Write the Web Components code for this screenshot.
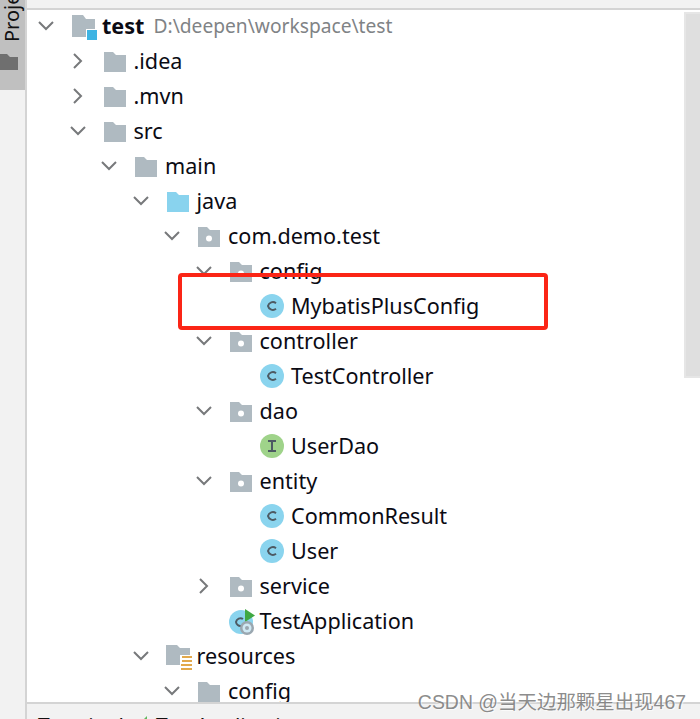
<!DOCTYPE html>
<html>
<head>
<meta charset="utf-8">
<title>Project tree</title>
<style>
  html, body { margin: 0; padding: 0; height: 100%; background: #fff; }
</style>
</head>
<body>
<project-window>
  <tree-row level="0" arrow="open" icon="module"><b>test</b><span slot="hint">D:\deepen\workspace\test</span></tree-row>
  <tree-row level="1" arrow="closed" icon="folder">.idea</tree-row>
  <tree-row level="1" arrow="closed" icon="folder">.mvn</tree-row>
  <tree-row level="1" arrow="open" icon="folder">src</tree-row>
  <tree-row level="2" arrow="open" icon="folder">main</tree-row>
  <tree-row level="3" arrow="open" icon="source">java</tree-row>
  <tree-row level="4" arrow="open" icon="package">com.demo.test</tree-row>
  <tree-row level="5" arrow="open" icon="package">config</tree-row>
  <tree-row level="6" icon="class">MybatisPlusConfig</tree-row>
  <tree-row level="5" arrow="open" icon="package">controller</tree-row>
  <tree-row level="6" icon="class">TestController</tree-row>
  <tree-row level="5" arrow="open" icon="package">dao</tree-row>
  <tree-row level="6" icon="interface">UserDao</tree-row>
  <tree-row level="5" arrow="open" icon="package">entity</tree-row>
  <tree-row level="6" icon="class">CommonResult</tree-row>
  <tree-row level="6" icon="class">User</tree-row>
  <tree-row level="5" arrow="closed" icon="package">service</tree-row>
  <tree-row level="5" icon="app">TestApplication</tree-row>
  <tree-row level="3" arrow="open" icon="resources">resources</tree-row>
  <tree-row level="4" arrow="open" icon="folder">config</tree-row>
</project-window>

<script>
// all icons are drawn on a 24x24 box
const FOLDER = 'M1 3h9l3 3h10v17H1z';
const ICONS = {
  folder: `<path fill="#afbac1" d="${FOLDER}"/>`,
  source: `<path fill="#89d3ee" d="${FOLDER}"/>`,
  package: `<path fill="#afbac1" d="${FOLDER}"/><circle cx="12" cy="14.5" r="3" fill="#fff"/>`,
  module: `<path fill="#afbac1" d="M1 1h11l3 4h9v18H1z"/><rect x="15" y="15" width="10" height="10" fill="#fff"/><rect x="16" y="16" width="10" height="10" fill="#3eb4e3"/>`,
  resources: `<path fill="#afbac1" d="M0 1h11l3 3h10v17H0z"/><rect x="14" y="11" width="12" height="14" fill="#fff"/><path fill="#e2a94c" d="M16 12h10v2H16zM16 16h10v2H16zM15 20h11v2H15zM15 24h11v2H15z"/>`,
  class: `<circle cx="12" cy="12" r="12" fill="#8ad4ee"/><path fill="none" stroke="#4d5a63" stroke-width="2" d="M16 9.2A5 5 0 0 0 8 12a5 5 0 0 0 8 2.8"/>`,
  interface: `<circle cx="12" cy="12" r="12" fill="#9fd38a"/><path fill="none" stroke="#4d5a63" stroke-width="2" d="M8 7h8M12 7v10M8 17h8"/>`,
  app: `<circle cx="12" cy="13" r="12" fill="#8ad4ee"/><path fill="none" stroke="#4d5a63" stroke-width="2" d="M14 10a4.5 4.5 0 0 0-7 3a4.5 4.5 0 0 0 5 4"/><path fill="#3fa843" d="M16 0l10 6.500l-10 6.500z"/><circle cx="18" cy="19" r="7" fill="#9aa7b0"/><circle cx="18" cy="19" r="4.500" fill="#cfe9f4"/><circle cx="18" cy="19" r="2" fill="#9aa7b0"/>`
};

class TreeRow extends HTMLElement {
  constructor() {
    super();
    this.attachShadow({ mode: 'open' });
  }

  connectedCallback() {
    const arrow = this.getAttribute('arrow');
    const icon = this.getAttribute('icon');
    const level = Number(this.getAttribute('level') || 0);
    let chevron = '';
    if (arrow === 'open') chevron = '<path d="M2 5l7 7 7-7"/>';
    if (arrow === 'closed') chevron = '<path d="M5 2l7 7-7 7"/>';
    this.shadowRoot.innerHTML = `
      <style>
        :host {
          display: flex;
          align-items: center;
          height: 35px;
          padding-left: ${37 + level * 31.5}px;
          font: 21.6px "Noto Sans", "Open Sans", sans-serif;
          color: #0b0b14;
          white-space: nowrap;
        }
        .arrow { width: 18px; height: 18px; flex: none; margin-right: 16px; }
        .arrow path { fill: none; stroke: #77797b; stroke-width: 2; }
        .icon { width: 24px; height: 24px; flex: none; margin-right: 7px; overflow: visible; }
        .name { padding-bottom: 2px; }
        .hint { margin-left: 9px; padding-bottom: 2px; color: #7f8386; font-size: 19.2px; }
      </style>
      <svg class="arrow" viewBox="0 0 18 18">${chevron}</svg>
      <svg class="icon" viewBox="0 0 24 24">${ICONS[icon]}</svg>
      <span class="name"><slot></slot></span>
      <span class="hint"><slot name="hint"></slot></span>
    `;
  }
}

class ProjectWindow extends HTMLElement {
  constructor() {
    super();
    this.attachShadow({ mode: 'open' });
    this.shadowRoot.innerHTML = `
      <style>
        :host { display: flex; flex-direction: column; position: relative; width: 700px; height: 719px; overflow: hidden; background: #fff; }
        .top { height: 8px; flex: none; background: #f2f2f2; border-bottom: 2px solid #d4d4d4; margin-left: 27px; }
        .middle { flex: 1; min-height: 0; display: flex; }
        .tree { flex: 1; min-width: 0; overflow: hidden; margin-top: -1.5px; }
        .bottom {
          flex: none; height: 15px; background: #f2f2f2; border-top: 2px solid #d4d4d4; margin-left: 27px;
          overflow: hidden; font: 21px "Noto Sans", sans-serif; color: #111; white-space: nowrap; line-height: 44px;
          display: flex; padding-left: 11px;
        }
        .bottom svg { margin: 12px 5px 0 17px; flex: none; }
        .rail {
          position: absolute; left: 0; top: 0; bottom: 0; width: 25px; background: #f2f2f2; border-right: 2px solid #d4d4d4;
        }
        .tab { height: 90px; background: #c0c0c0; position: relative; overflow: hidden; }
        .tab span {
          position: absolute; left: -2px; top: -6px; writing-mode: vertical-rl; transform: rotate(180deg);
          height: 48px; width: 22px; font: 20px "Noto Sans", sans-serif; color: #111; text-align: left;
        }
        .tab svg { position: absolute; left: 0; top: 54px; }
        .scroll {
          position: absolute; right: 0; top: 12px; width: 16px; height: 366px;
          background: #dfdfdf; border: 2px solid #e6e6e6; box-sizing: border-box; border-right: 0;
        }
        .mark {
          position: absolute; right: 14px; top: 686px; font: 19.45px "Liberation Sans", "Noto Sans CJK SC", sans-serif;
          color: rgba(110,110,110,.8); white-space: nowrap; text-shadow: 1px 1px 1px rgba(255,255,255,.7);
        }
        .box {
          position: absolute; left: 178px; top: 273px; width: 370px; height: 57px; box-sizing: border-box;
          border: 4px solid #fb2516; border-radius: 4px;
        }
      </style>
      <div class="top"></div>
      <div class="middle"><div class="tree"><slot></slot></div></div>
      <div class="bottom">
        <span>Terminal</span>
        <svg width="10" height="6" viewBox="0 0 10 6"><path fill="#5fb85f" d="M0 6l6-6v6z"/></svg>
        <span>TestApplication</span>
      </div>
      <div class="rail">
        <div class="tab">
          <span>Project</span>
          <svg width="18" height="16" viewBox="0 0 18 16"><path fill="#6f6f6f" d="M0 0h7l3 3h8v13H0z"/></svg>
        </div>
      </div>
      <div class="scroll"></div>
      <div class="box"></div>
      <div class="mark">CSDN @当天边那颗星出现467</div>
    `;
  }
}

customElements.define('tree-row', TreeRow);
customElements.define('project-window', ProjectWindow);
</script>
</body>
</html>
